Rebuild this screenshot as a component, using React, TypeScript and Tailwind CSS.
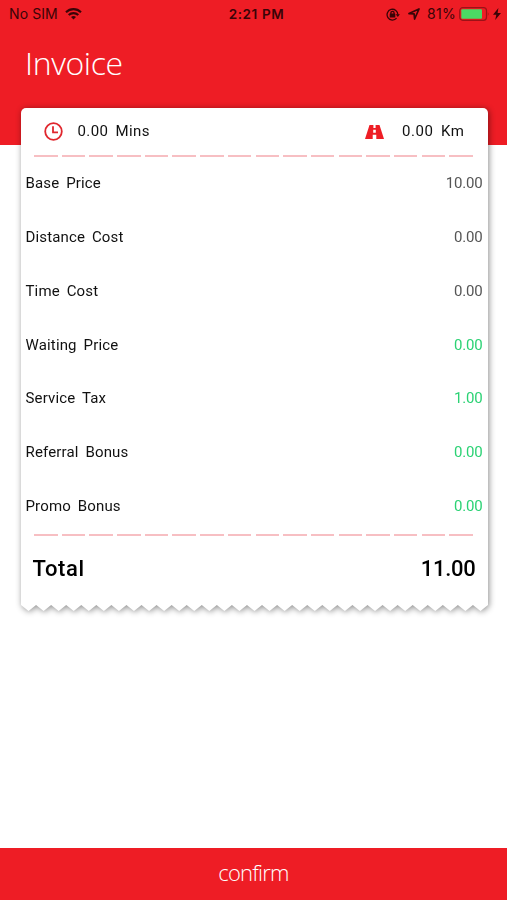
interface InvoiceRow {
  label: string;
  value: string;
  highlight?: boolean;
}

const rows: InvoiceRow[] = [
  { label: "Base Price", value: "10.00" },
  { label: "Distance Cost", value: "0.00" },
  { label: "Time Cost", value: "0.00" },
  { label: "Waiting Price", value: "0.00", highlight: true },
  { label: "Service Tax", value: "1.00", highlight: true },
  { label: "Referral Bonus", value: "0.00", highlight: true },
  { label: "Promo Bonus", value: "0.00", highlight: true },
];

const TEETH = 31;
const TOOTH_WIDTH = 467 / TEETH;

const tornEdge = Array.from({ length: TEETH }, (_, i) => {
  const right = 467 - i * TOOTH_WIDTH;
  return `L${(right - TOOTH_WIDTH / 2).toFixed(2)} 6 L${(right - TOOTH_WIDTH).toFixed(2)} 0`;
}).join(" ");

function WifiIcon() {
  return (
    <svg width="17" height="12" viewBox="0 0 17 12" fill="none" stroke="#390407" strokeWidth="2.1">
      <path d="M1 4.2C5.2.1 11.8.1 16 4.2" />
      <path d="M3.7 7.1C6.4 4.5 10.6 4.5 13.3 7.1" />
      <path d="M6 9.1C7.5 7.7 9.5 7.7 11 9.1L8.5 11.6Z" fill="#390407" stroke="none" />
    </svg>
  );
}

function RotationLockIcon() {
  return (
    <svg width="14" height="13" viewBox="0 0 14 13" fill="none" stroke="#390407" strokeWidth="1.3">
      <path d="M10.6 10.2A5.4 5.4 0 1 1 11.9 6.8" />
      <path d="M9.7 6.2H13.9L11.8 8.9Z" fill="#390407" stroke="none" />
      <path d="M4.9 6V4.9a1.6 1.6 0 0 1 3.2 0V6" />
      <rect x="3.7" y="5.6" width="5.6" height="4" rx=".5" fill="#390407" stroke="none" />
    </svg>
  );
}

function RoadIcon() {
  return (
    <svg width="19" height="14" viewBox="0 0 19 14" fill="#ee1d25">
      <path d="M4.5 0H8.4V3H10.6V0H14.5L19 14H11.3V9.8H7.7V14H0ZM8.2 4.8V7.8H10.8V4.8Z" fillRule="evenodd" />
    </svg>
  );
}

function StatusBar() {
  return (
    <div className="flex h-7 items-center justify-between pr-[6px] pl-[9px] font-[Inter,sans-serif] text-[14px] leading-none text-[#390407]">
      <div className="flex w-[160px] items-center gap-[7px]">
        <span className="tracking-[0.1px]">No SIM</span>
        <WifiIcon />
      </div>
      <span className="mt-px ml-[17px] text-[13.5px] font-semibold tracking-[0.6px]">2:21 PM</span>
      <div className="flex w-[174px] items-center justify-end">
        <RotationLockIcon />
        <svg className="ml-[8px]" width="12" height="12" viewBox="0 0 12 12" fill="none" stroke="#390407" strokeWidth="1.7" strokeLinejoin="round">
          <path d="M1 5.6L11 1L6.6 11L6.1 5.9Z" />
        </svg>
        <span className="ml-[7px] tracking-[0.3px]">81%</span>
        <svg className="ml-[3px]" width="31" height="14" viewBox="0 0 31 14">
          <rect x=".7" y=".7" width="26.8" height="12.6" rx="3" fill="none" stroke="#9b1217" strokeWidth="1.2" />
          <rect x="2.3" y="2.3" width="20.7" height="9.4" rx="1" fill="#4cd964" />
          <path d="M28.9 5q1.5 2 0 4z" fill="#9b1217" />
        </svg>
        <svg className="ml-[3px]" width="8" height="12" viewBox="0 0 8 12" fill="#390407">
          <path d="M5.4 0L0 6.8H3.3L2.2 12L8 4.9H4.6Z" />
        </svg>
      </div>
    </div>
  );
}

function DashedDivider() {
  return (
    <div className="mr-[14.5px] ml-[13.5px] flex h-[2px] justify-between">
      {Array.from({ length: 16 }, (_, i) => (
        <span key={i} className="w-[23.5px] bg-[#f7bfc3]" />
      ))}
    </div>
  );
}

export default function App() {
  return (
    <div className="flex h-[900px] w-[507px] flex-col overflow-hidden bg-white font-[Roboto,sans-serif] text-[#111]">
      <header className="h-[145px] shrink-0 bg-[#ee1d25]">
        <StatusBar />
        <h1 className="mt-[13px] ml-[25px] font-['Open_Sans',sans-serif] text-[32px] leading-[44px] font-light tracking-[-0.4px] text-white">
          Invoice
        </h1>
      </header>

      <main className="relative -mt-[37px] ml-[20.5px] w-[467px] drop-shadow-[1px_1px_3px_rgba(0,0,0,0.45)]">
        <div className="rounded-t-[5px] bg-white">
          <div className="flex h-[47px] items-center pr-[23px] pl-[23.5px] text-[15px] [word-spacing:3px]">
            <svg width="19" height="19" viewBox="0 0 19 19" fill="none" stroke="#e0272e" strokeWidth="1.8">
              <circle cx="9.5" cy="9.5" r="8.3" />
              <path d="M9 4.2V10.3H14" />
            </svg>
            <span className="ml-[14.5px] tracking-[0.4px]">0.00 Mins</span>
            <span className="ml-auto">
              <RoadIcon />
            </span>
            <span className="ml-[17.5px] tracking-[0.6px]">0.00 Km</span>
          </div>
          <DashedDivider />
          <div className="h-[376.5px]">
            {rows.map((row) => (
              <div
                key={row.label}
                className="flex h-[53.8px] items-start justify-between pt-[15.3px] pr-[5px] pl-[5px] text-[15px] leading-[22px]"
              >
                <span className="tracking-[0.15px] [word-spacing:3px]">{row.label}</span>
                <span className={row.highlight ? "tracking-[-0.2px] text-[#2bd274]" : "tracking-[-0.2px] text-[#555]"}>
                  {row.value}
                </span>
              </div>
            ))}
          </div>
          <DashedDivider />
          <div className="flex h-[69.5px] items-center justify-between pr-[12px] pb-[4px] pl-[12px] text-[22px] font-medium text-black">
            <span className="tracking-[0.6px]">Total</span>
            <span className="tracking-[-0.3px]">11.00</span>
          </div>
        </div>
        <svg className="-mt-px block" width="467" height="7" viewBox="0 -1 467 7" fill="white">
          <path d={`M0 -1H467V0 ${tornEdge} Z`} />
        </svg>
      </main>

      <button
        type="button"
        className="mt-auto h-[52px] w-full shrink-0 bg-[#ee1d25] pb-[4px] font-['Open_Sans',sans-serif] text-[22px] font-light tracking-[-0.8px] text-white"
      >
        confirm
      </button>
    </div>
  );
}
